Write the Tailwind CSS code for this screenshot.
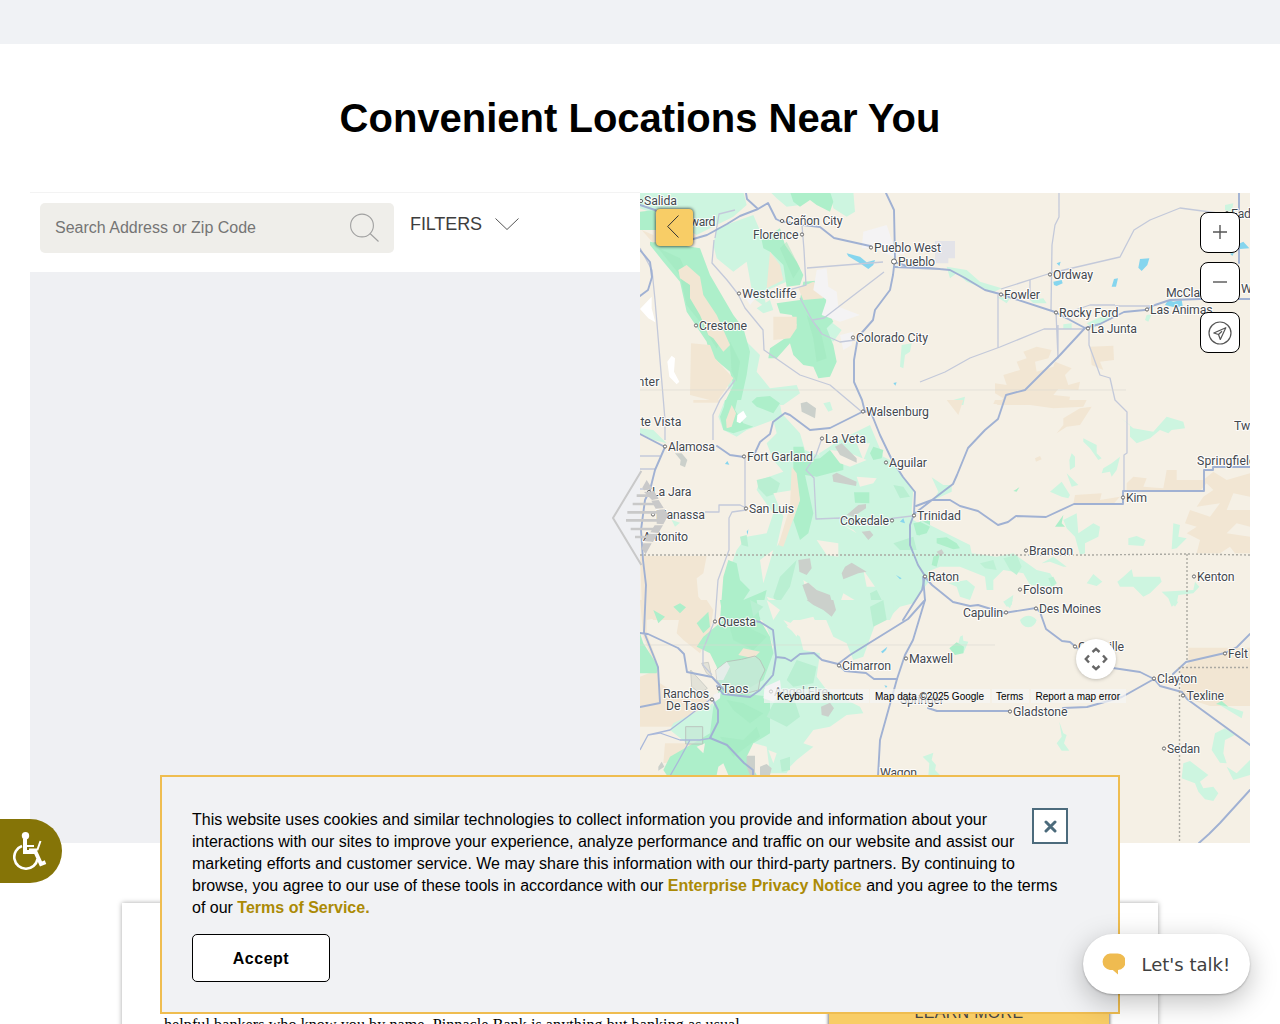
<!DOCTYPE html>
<html lang="en">
<head>
<meta charset="utf-8">
<title>Convenient Locations Near You</title>
<script src="https://cdn.jsdelivr.net/npm/@tailwindcss/browser@4"></script>
</head>
<body class="relative h-[1024px] overflow-hidden bg-white font-['Liberation_Sans',Arial,sans-serif] text-black">
<div class="h-11 bg-[#f0f2f5]"></div>
<h1 class="pt-[51px] h-[149px] text-center text-[40px] leading-[46px] font-bold whitespace-nowrap">Convenient Locations Near You</h1>

<main class="mx-[30px] flex h-[650px]">
  <section class="flex w-[610px] flex-col">
    <div class="-mt-px flex h-20 items-start border-t border-[#f3f3f3] pl-2.5 pt-2.5">
      <div class="flex h-[50px] w-[354px] items-center justify-between rounded-[5px] bg-[#efeeea] px-[15px]">
        <span class="text-base text-[#757575]">Search Address or Zip Code</span>
        <svg class="h-[29px] w-[29px] -mt-0.5" viewBox="0 0 29 29" fill="none" stroke="#a0a0a0" stroke-width="1.1"><circle cx="12" cy="12.500" r="11.400"/><path d="M20 20.500l8.500 8"/></svg>
      </div>
      <div class="ml-4 flex items-center gap-3 pt-[7px] text-[18px] leading-7 text-[#3d3d3d]"><span class="w-[73px] tracking-[-0.1px]">FILTERS</span>
        <svg class="h-3 w-6" viewBox="0 0 24 12" fill="none" stroke="#555" stroke-width="1"><path d="M.5.5L12 11.500 23.500.5"/></svg>
      </div>
    </div>
    <div class="flex-1 bg-[#eff0f3]"></div>
  </section>
  <section class="w-[610px]">
    <svg class="block h-[650px] w-[610px] overflow-hidden" viewBox="640 193 610 650">
      <rect x="640" y="193" width="610" height="650" fill="#f5f0e5"/>

      <!-- terrain: north west -->
      <g transform="translate(600 185) scale(.333333)">
        <path fill="#cdf5e0" d="M120 20H430L440 60 400 95 350 120 290 150 200 100 120 70zM510 20L590 25 600 60 560 65 530 40zM690 20H760L765 80 740 95 700 70zM350 130L460 90 490 160 570 210 590 260 560 290 490 320 500 370 460 340 440 230 400 260 350 220 340 180zM470 370L510 345 520 375 490 385zM660 385L725 435 700 470 660 450zM905 480L935 475 930 500 915 510 910 550 900 545zM440 470L480 510 470 560 510 610 590 600 600 625 550 660H430L380 600 400 560 370 520 400 470zM190 20H420V60L380 80 270 60z"/>
        <path fill="#adefca" d="M120 80L165 75 170 135 120 135zM570 20H690L700 50 690 80 650 60 630 45 600 65 580 50zM150 170L240 180 300 190 330 270 400 390 430 430 450 500 440 570 420 660H370L400 600 390 560 330 510 320 470 280 410 260 380 240 290 190 230 150 180zM485 165L540 130 555 180 590 230 610 270 600 300 560 305 550 240 510 200 490 190zM530 355L600 345 610 290 675 285 680 370 700 410 680 430 700 480 710 530 690 575 655 580 640 545 610 540 580 510 570 475 530 520 505 520 510 490 570 450 590 420 575 390 540 385z"/>
        <path fill="#9fe8be" opacity=".5" d="M175 190L240 220 290 330 330 420 360 470 350 490 300 410 260 360 240 270zM390 470L420 530 410 590 395 560zM560 170L600 250 580 280 540 190zM620 390L660 430 680 520 650 530 640 460z"/>
        <path fill="#f2e6d3" d="M235 255L260 240 300 275 310 330 350 390 390 480 370 500 340 460 325 450 300 390 270 340 270 300 240 280zM273 475L330 480 345 520 400 580 350 650 270 630zM510 200L540 240 550 285 500 310zM520 395L590 395 590 430 570 460 520 465zM595 310L640 290 670 310 670 340 610 345zM125 135L160 150 160 175z"/>
        <path fill="#f4f3f4" d="M790 140L860 120 880 180 930 200 880 215 820 190 785 190zM650 255L680 250 685 305 710 320 715 365 780 390 720 410 665 390 680 345 640 315zM720 450L760 440 755 480 730 495zM435 335L470 335 450 360z"/>
        <path fill="#fff" d="M120 372L155 335 155 370 166 412 145 400zM202 530L215 512 225 520 222 560 238 590 230 598 208 575z"/>
        <path fill="#85d5ee" d="M740 205L780 215 800 232 825 225 820 240 805 252 780 235 745 214zM880 594L890 592 886 602z"/>
      </g>
      <!-- terrain: north east -->
      <g transform="translate(920 185) scale(.333333)">
        <path fill="#e3e3e8" d="M45 168H105V220H85V235H45z"/>
        <path fill="#cdf5e0" d="M80 245L140 255 180 290 245 310 220 322 140 290 110 265 90 280zM230 335L270 340 260 355zM330 345L370 340 380 355 340 355zM430 418L455 415 455 432 430 432zM500 415L590 375 570 400 520 430zM915 60L940 55 935 80 915 75zM680 390L695 388 685 410 675 405zM100 645L135 635 130 660H100z"/>
        <path fill="#f2e6d3" d="M310 500L350 485 395 495 385 520 345 530 350 560 400 545 405 530 455 550 435 570 445 600 480 590 475 615 415 612 400 630 450 635 445 660H230L250 640 225 625 225 595 260 600 250 570 300 555 290 530 320 520zM510 485L580 482 582 525 540 530 550 555 515 540z"/>
        <path fill="#85d5ee" d="M660 222L688 220 682 240 665 258 655 248zM575 305L582 282 594 280 588 305zM400 290L425 285 428 295 410 303 402 300zM410 235L422 230 418 243zM960 175L970 170 988 190 960 192zM735 360L745 345 760 350 785 345 788 362 770 368zM930 206L942 203 937 213z"/>
      </g>
      <!-- terrain: centre west -->
      <g transform="translate(600 400) scale(.333333)">
        <path fill="#cdf5e0" d="M375 0H500L540 12 545 40 600 100 615 150 650 165 720 120 810 75 850 170 870 180 940 270 935 330 940 360 990 390V540L960 580 940 610 900 620 880 640 870 660H360L385 520 410 450 440 410 500 400 520 340 470 270 480 240 550 215 520 180 500 130 530 100 520 60 440 90 410 110 370 90 355 50zM120 85L160 90 200 130 160 120 120 100zM215 360L240 368 225 380zM670 10L690 5 698 30 685 35z"/>
        <path fill="#adefca" d="M360 50L372 20 375 0H412L405 30 430 70 460 80 400 100 370 90zM580 140L610 140 620 180 660 175 690 150 730 170 730 210 690 220 650 230 615 225 640 340 625 400 600 420 580 360 600 300 580 210zM360 660L370 530 385 480 410 490 420 540 450 570 430 600 500 570 480 660zM820 140L850 150 845 175 820 180 810 160zM762 277L808 277 808 310 765 308zM455 5L470 -8 510 -12 540 10 520 40 470 20zM285 490L305 488 312 505 298 515zM220 620L240 605 258 622 235 640zM160 620L190 640 190 660H160zM940 370L990 360V410L950 405z"/>
        <path fill="#b9efd2" d="M470 240L510 230 540 250 530 280 500 290 475 265zM540 530L590 480 570 560 530 620 520 590zM810 580L830 570 860 630 820 640zM880 255L910 260 930 290 900 295zM880 430L940 410 950 450 900 450zM420 410L440 405 445 440 425 435z"/>
        <path fill="#f5f0e5" d="M580 70L630 90 660 170 620 120zM770 230L830 235 820 250 780 260zM770 130L810 130 790 180zM690 150L740 155 800 180 750 200 720 190zM520 280L580 270 595 300 560 390 530 440 550 350zM480 480L520 450 490 550zM650 420L715 430 715 470 680 465zM730 580L780 610 780 640 720 610zM790 510L825 560 800 560zM720 370L760 390 750 380 770 400zM610 540L640 560 620 585zM500 590L530 600 540 640 520 625z"/>
        <path fill="#f2e6d3" d="M280 0H360V8H280zM378 60L395 15 408 40 395 80 380 85zM120 468H320L310 520 290 535 295 590 320 620 330 660H160L140 640 125 600zM575 200L590 220 600 300 550 440 535 435 570 320z"/>
        <path fill="#fff" d="M412 45L430 32 440 50 420 70 410 65z"/>
        <path fill="#cbd0cb" d="M602 10L620 5 648 25 645 55 605 35zM705 140L725 130 770 175 770 188 720 165zM697 225L710 218 770 245 768 258 700 245zM775 315L798 312 798 325 760 350 740 345zM785 395L810 392 820 405 805 420zM595 480L630 475 635 505 620 525 598 515zM735 500L755 488 800 515 775 520 730 538 725 520zM607 555L625 548 650 570 690 585 705 640 690 650 670 635 650 615 625 605zM225 160L245 160 262 180 255 202 240 195 242 180z"/>
        <path fill="#85d5ee" d="M375 192L382 183 388 194zM440 395L445 388 443 405zM888 525L905 535 900 538zM900 365L910 355 915 370z"/>
      </g>
      <!-- terrain: centre east -->
      <g transform="translate(920 400) scale(.333333)">
        <path fill="#cdf5e0" d="M35 232L70 255 95 255 95 275 40 300 55 275zM600 52L640 85 700 95 740 50 790 65 795 85 755 90 745 100 720 90 690 115 650 130 630 110 630 75zM490 115L530 135 530 160 545 175 535 180 510 145 490 125zM455 160L465 170 465 200 450 210 448 180zM600 170L590 210 575 230 570 215 545 220 550 205 575 190zM440 220L475 255 455 260zM390 275L425 245 450 285 445 295 425 290zM430 360L470 340 475 400 520 370 540 380 535 410 495 430 495 460 480 465 465 410 440 385zM625 415L650 408 677 420 670 438 625 435zM760 370L780 375 775 410 800 415 770 445 755 448zM0 360L100 410 150 435 155 460 230 470 280 460 350 510 390 520 410 550 400 560 330 555 310 520 250 510 220 540 220 570 200 570 195 530 120 500 60 500 10 520 0 500zM85 550L140 540 165 560 150 600 120 590 110 560zM365 490L400 470 440 500 430 500 390 485zM500 550L520 522 547 545 530 558zM592 545L610 530 635 508 640 530 720 530 725 545 690 580 670 590 640 560 600 560zM725 575L820 570 825 545 838 560 820 580 775 585 770 610 755 620 745 595zM250 605L280 585 275 615 260 620z"/>
        <path fill="#adefca" d="M405 380L430 345 425 370 435 380zM883 290L890 280 897 300 888 310zM0 365L30 380 20 400 0 405zM50 415L80 412 110 430 120 445 100 448 50 430zM40 470L60 460 50 500 35 495zM280 273L298 262 290 275z"/>
        <path fill="#bdf1d5" d="M250 475L290 465 305 500 290 525 270 510zM180 490L220 480 230 510 195 505zM385 535L400 530 410 550 395 560z"/>
        <path fill="#cbd0cb" d="M50 455L65 448 72 460 60 468z"/>
        <path fill="#f2e6d3" d="M80 0H130L115 45zM225 0H500L490 20 400 25 330 15 220 12zM430 55L480 25 515 20 480 75 440 80 410 100 430 75zM345 175L360 168 365 178 348 185zM465 285L545 280 540 300 600 290 580 312H460zM620 250L640 230 680 235 670 260 730 265 740 210 770 210 770 240 850 240 880 215 920 240 990 220V290L940 280 920 330 990 330V380L950 370 920 400 990 410V460H945L930 440 900 460 830 460 840 420 800 400 830 380 795 370 810 330 870 350 900 310 830 320 850 290 880 270 860 250 840 272H620z"/>
      </g>
      <!-- terrain: south west -->
      <g transform="translate(600 600) scale(.333333)">
        <path fill="#f2e6d3" d="M120 0H320L340 30 330 100 300 160 250 120 230 100 240 40 140 60 140 100 170 180 180 250 260 300 320 280 320 340 230 380 120 380V230L170 210 130 110zM195 430H280L250 480 190 490z"/>
        <path fill="#cdf5e0" d="M440 0H880V40L830 60 790 170 760 180 740 130 700 110 670 40 600 40 560 80 600 110 610 150 660 160 650 230 680 270 740 300 780 320 790 340 740 345 690 380 640 390 610 430 640 440 590 480 570 500 560 520 510 520 500 440 430 420 400 260 460 240 500 200 520 140 500 80zM220 370L340 310 350 400 260 430 210 390z"/>
        <path fill="#adefca" d="M360 0H470L480 60 510 110 520 160 490 240 420 280 510 290 510 400 460 430 440 470 470 525H200L190 510 210 470 280 430 330 400 340 320 360 260 350 200 330 160 290 140 310 110 370 60zM120 100L130 130 175 200 170 220 120 220zM220 20L240 10 258 22 240 40zM160 30L195 50 175 70zM290 70L325 35 330 80 310 100z"/>
        <path fill="#b9efd2" d="M590 180L650 200 640 250 580 260 560 240zM520 310L580 290 600 350 560 380 500 350zM810 20L850 0 860 60 820 80zM540 480L570 470 570 510 545 515zM450 0L490 20 460 50z"/>
        <path fill="#9fe8be" opacity=".45" d="M380 50L440 80 500 110 460 150 400 120zM380 300L430 310 490 340 450 370 400 330zM360 410L430 420 470 380 480 410 400 470z"/>
        <path fill="#f5f0e5" d="M290 440L315 430 310 460zM355 500L370 490 385 525H350zM505 450L530 460 520 490zM600 60L640 50 670 120 620 110zM500 0L540 30 520 60zM550 60L600 80 590 110z"/>
        <path fill="#f2e6d3" d="M415 165L430 145 480 155 460 175z"/>
        <path fill="#c8ead8" opacity=".8" stroke="#b8bcb8" stroke-width="3" d="M348 210L380 185 425 178 465 168 480 180 495 210 480 240 475 270 440 280 380 280 350 240zM257 380H308V432H257z"/>
        <path fill="#dfdfd6" opacity=".8" stroke="#c4c6c0" stroke-width="3" d="M272 210L322 265 300 280 275 260zM305 190L325 187 335 230 320 220z"/>
        <path fill="#eeeeee" opacity=".8" d="M348 210L380 185 390 200 370 240 350 240z"/>
        <path fill="#cbd0cb" d="M620 0H700L708 30 695 50 670 30 640 15zM663 320L690 308 702 325 685 350 665 345zM440 467H465V525H450L440 500zM480 500L500 492 515 505 510 525H480zM175 500L185 485 193 500 175 512z"/>
        <path fill="#f4f3f4" d="M495 260L540 240 545 280 520 305 490 295zM340 285L362 275 360 295 345 305z"/>
        <path fill="#85d5ee" d="M843 155L862 140 858 150 848 160zM853 256L862 258 858 264z"/>
      </g>
      <!-- terrain: south east -->
      <g transform="translate(920 600) scale(.333333)">
        <path fill="#f2e6d3" d="M805 143H990V318H870L785 290 780 210 805 190z"/>
        <path fill="#cdf5e0" d="M120 110L128 106 130 122 145 125 130 160 110 150zM300 60Q325 35 350 60Q345 80 325 82Q305 80 300 60zM250 5L278 0 270 25zM750 0L775 5 765 20zM418 365L430 400 440 405 432 430 448 452 425 452 410 430 425 410zM8 470L40 458 35 480 48 495 45 510 65 530 25 528 28 490zM890 310L920 318 970 335 965 355 940 340zM885 400L915 385 945 405 915 420 910 460 920 490 900 488 875 450zM790 490L810 483 865 525 840 545 850 565 880 560 895 580 880 603 855 598 835 575 825 550 785 535zM920 500L950 520 990 480V525L940 540z"/>
        <path fill="#adefca" d="M88 145L110 127 132 140 130 160 105 165zM888 312L905 303 925 320z"/>
      </g>

      <!-- secondary roads -->
      <g fill="none" stroke="#c3c9da" stroke-width="1.3" stroke-linejoin="round">
        <path d="M640 248L652 270 655 300 660 360 665 420M714 240L712 263 727 280 738 294 745 308 763 330 764 350 800 375 830 385 862 412M715 238L719 214 735 210M785 291L806 285 804 250 802 225M807 268L883 262M812 320L824 318 884 272M800 298L812 320 822 334 840 342 855 340"/>
        <path d="M1059 193V217L1055 225 1052 245 1051 310M1051 273L1001 289M1051 273L1120 257 1134 230 1150 220 1180 208 1225 214M998 295V348M1058 325V358L1056 312M920 382L945 372 970 358 1000 347 1044 329H1085M1075 310L1090 305H1115M1115 306H1150M1089 330V345L1100 375 1110 378 1115 400 1127 412 1127 453 1124 455V490M1030 280V300"/>
        <path d="M745 458V508M713 440V415L720 400 735 380M665 440V420M705 512H719V505H740L746 508M746 510L732 512 729 518V550L718 580 715 620M822 438L816 455 806 470 814 478 816 519 840 518 865 524 895 518 912 516M640 456H660M640 469H655M640 489H648M714 622L703 650 703 665 712 675"/>
        <path d="M640 750L648 735 670 730 690 715 712 698M648 735L660 733 680 740 700 740 712 738M690 740L678 762 670 776" stroke="#a9b8da"/>
        <path stroke="#d9d8d2" stroke-width=".6" d="M640 390H1126M640 645H995"/>
      </g>
      <!-- highways -->
      <g fill="none" stroke="#a0b1d3" stroke-width="1.9" stroke-linejoin="round" stroke-linecap="round">
        <path d="M640 205L655 210 690 240 707 235 727 224 740 216 758 209 768 203 776 219 780 221 803 225 820 227 834 238 870 246 M894 262L907 266 950 270 965 278 985 290 1000 294 1055 312 1085 328 1100 324 1124 312 1145 310M895 267L940 269M746 193L747 199 758 209M640 296L648 290 652 277 650 262 640 250"/>
        <path d="M886 193L894 210 895 258 893 275 890 290 875 310 873 320 858 337 854 360V382L862 400 865 412 870 410 880 435 892 460 903 477 915 492 914 514 910 525V545L918 565 925 576 922 590 903 620M925 600L913 640 905 655 897 679 880 740 878 776"/>
        <path d="M862 412L830 428 810 430 790 415 785 413 773 422 770 434 760 442 754 455M744 457L730 455 717 446M665 447L640 434M665 447L655 470 650 490 645 500 641 530 643 560 646 585 644 632 658 667 660 703 640 707M640 633L648 634 678 648 684 654 687 672 712 677 724 690"/>
        <path d="M914 514L932 500 953 484 957 475 968 448 985 430 998 419 1006 395 1025 390 1045 370 1060 355 1085 328M916 506L932 500 950 500 960 506 978 511 998 525 1008 522 1016 516 1046 517 1074 504H1123V491H1204V470H1213V467H1250M1145 310L1155 305 1170 300 1200 299H1250M1239 193V263"/>
        <path d="M925 577L932 585 953 602 970 606 978 605 1004 613 1036 608 1040 612 1046 629 1062 641 1070 642 1077 648 1113 668 1140 672 1154 679 1160 686 1182 692 1187 699 1250 745M1154 679L1122 697 1087 707 1063 708M1010 711H937L928 708M1173 674L1186 662 1225 653 1237 647 1250 634M1250 790L1220 823 1209 834 1199 843M925 600L908 619 850 655 838 664 822 660 814 653 800 654 791 661 785 658 776 657 773 630 760 622 755 621M776 657L773 675 760 690 750 697 723 694 717 686M838 664L845 671 866 673 874 679H897M713 700L718 710V722L710 738 727 745 744 763 753 770V776M923 577L925 600"/>
      </g>
      <g fill="none" stroke="#aaa9a2" stroke-width="1.4" stroke-dasharray="2 2"><path d="M640 555H1087L1186 554 1250 555M1187 554V662M1182 667.500H1250M1179.500 667V843"/></g>

      <!-- place markers -->
      <g fill="#fff" stroke="#666" stroke-width="1">
        <circle cx="641" cy="201" r="1.6"/><circle cx="782" cy="221" r="1.6"/><circle cx="802" cy="234.500" r="1.6"/><circle cx="871" cy="247.500" r="1.6"/><circle cx="894" cy="261.500" r="2.5"/><circle cx="739" cy="293.500" r="1.6"/><circle cx="696" cy="325.500" r="1.6"/><circle cx="853" cy="337.500" r="1.6"/><circle cx="1001" cy="294.500" r="1.6"/><circle cx="1050" cy="274.500" r="1.6"/><circle cx="1056" cy="312.500" r="1.6"/><circle cx="1088" cy="328.500" r="1.6"/><circle cx="1147" cy="309.500" r="1.6"/><circle cx="863" cy="411.500" r="1.6"/><circle cx="822" cy="438.500" r="1.6"/><circle cx="744" cy="456.500" r="1.6"/><circle cx="665" cy="446.500" r="1.6"/><circle cx="886" cy="462.500" r="1.6"/><circle cx="746" cy="508.500" r="1.6"/><circle cx="653" cy="514.500" r="1.6"/><circle cx="649" cy="492" r="1.6"/><circle cx="892" cy="520.500" r="1.6"/><circle cx="914" cy="515.500" r="1.6"/><circle cx="1123" cy="497.500" r="1.6"/><circle cx="1026" cy="550.500" r="1.6"/><circle cx="1194" cy="576.500" r="1.6"/><circle cx="1020" cy="589.500" r="1.6"/><circle cx="1036" cy="608.500" r="1.6"/><circle cx="1006" cy="612.500" r="1.6"/><circle cx="925" cy="576.500" r="1.6"/><circle cx="715" cy="621.500" r="1.6"/><circle cx="719" cy="688.500" r="1.6"/><circle cx="712" cy="699.500" r="1.6"/><circle cx="771" cy="691.500" r="1.6"/><circle cx="839" cy="665.500" r="1.6"/><circle cx="906" cy="658.500" r="1.6"/><circle cx="1010" cy="711.500" r="1.6"/><circle cx="1154" cy="678.500" r="1.6"/><circle cx="1183" cy="695.500" r="1.6"/><circle cx="1225" cy="653.500" r="1.6"/><circle cx="1164" cy="748.500" r="1.6"/><circle cx="1075" cy="646.500" r="1.6"/><circle cx="1227" cy="213" r="1.6"/>
      </g>
      <!-- place names -->
      <g class="font-[Roboto,sans-serif] text-[12.3px]" fill="#44484e" stroke="#fff" stroke-opacity=".85" stroke-width="2.2" stroke-linejoin="round" paint-order="stroke">
        <text x="644" y="205" textLength="33">Salida</text><text x="675" y="226" textLength="40.500">Howard</text><text x="785.500" y="225" textLength="57">Cañon City</text><text x="753" y="239" textLength="45.500">Florence</text><text x="874" y="252" textLength="67">Pueblo West</text><text x="898" y="266" textLength="37">Pueblo</text><text x="742" y="298" textLength="54.500">Westcliffe</text><text x="699" y="330" textLength="48">Crestone</text><text x="856" y="342" textLength="72">Colorado City</text><text x="622.500" y="386" textLength="37">Center</text>
        <text x="1004" y="299" textLength="36">Fowler</text><text x="1053" y="279" textLength="40">Ordway</text><text x="1059" y="317" textLength="59.500">Rocky Ford</text><text x="1091" y="333" textLength="46">La Junta</text><text x="1166" y="297" textLength="46">McClave</text><text x="1150" y="314" textLength="62.500">Las Animas</text><text x="1231" y="218" textLength="26">Eads</text><text x="1241" y="293">Wiley</text><text x="1234" y="430">Two Buttes</text><text x="1197" y="465" textLength="59">Springfield</text>
        <text x="1126" y="502" textLength="21">Kim</text><text x="1029" y="555" textLength="44">Branson</text><text x="1197" y="581" textLength="37.500">Kenton</text><text x="1023" y="594" textLength="40">Folsom</text><text x="1039" y="613" textLength="62">Des Moines</text><text x="963" y="617" textLength="40">Capulin</text><text x="928" y="581" textLength="31">Raton</text><text x="917" y="520" textLength="44">Trinidad</text><text x="889" y="467" textLength="38">Aguilar</text><text x="866" y="416" textLength="63">Walsenburg</text><text x="825" y="443" textLength="41">La Veta</text><text x="747" y="461" textLength="66">Fort Garland</text><text x="668" y="451" textLength="47">Alamosa</text><text x="616" y="426" textLength="65.500">Monte Vista</text>
        <text x="652" y="496" textLength="39.500">La Jara</text><text x="749" y="513" textLength="45">San Luis</text><text x="656" y="519" textLength="49">Manassa</text><text x="643" y="541" textLength="45">Antonito</text><text x="840" y="525" textLength="49">Cokedale</text><text x="718" y="626" textLength="38">Questa</text><text x="663" y="698" textLength="46">Ranchos</text><text x="666" y="710" textLength="43.500">De Taos</text><text x="722" y="693" textLength="26.500">Taos</text><text x="774" y="696" textLength="54" opacity=".6">Angel Fire</text><text x="842" y="670" textLength="49">Cimarron</text><text x="909" y="663" textLength="44">Maxwell</text><text x="900" y="704" textLength="44">Springer</text><text x="1013" y="716" textLength="54.500">Gladstone</text><text x="1157" y="683" textLength="40">Clayton</text><text x="1186.500" y="700" textLength="37.500">Texline</text><text x="1228" y="658" textLength="20">Felt</text><text x="1167" y="753" textLength="33">Sedan</text><text x="1078" y="651" textLength="46">Grenville</text><text x="880" y="777" textLength="37">Wagon</text>
      </g>
    </svg>
  </section>
</main>

<!-- map controls -->
<button class="absolute left-[656px] top-[209px] flex h-[37px] w-[37px] items-center justify-center rounded-[4px] bg-[#f8cd66] pr-[3px] pb-0.5 shadow-[0_0_3px_1px_rgba(0,0,0,.55)]"><svg class="h-[23px] w-3" viewBox="0 0 12 23" fill="none" stroke="#333"><path d="M11.500.5L.7 11.500 11.500 22.500"/></svg></button>
<div class="absolute left-[1200px] top-[212px] flex flex-col gap-2.5">
  <button class="flex h-[41px] w-10 items-center justify-center rounded-[8px] border border-black bg-white pb-px"><svg class="h-[14px] w-[14px]" viewBox="0 0 14 14" stroke="#555" stroke-width="1.4"><path d="M0 7h14M7 0v14"/></svg></button>
  <button class="-mt-px flex h-[41px] w-10 items-center justify-center rounded-[8px] border border-black bg-white pb-px"><svg class="h-[14px] w-[14px]" viewBox="0 0 14 14" stroke="#555" stroke-width="1.4"><path d="M0 7h14"/></svg></button>
  <button class="-mt-px flex h-[41px] w-10 items-center justify-center rounded-[8px] border border-black bg-white"><svg class="mt-px h-6 w-6" viewBox="0 0 24 24" fill="none" stroke="#555" stroke-width="1.2"><circle cx="12" cy="12" r="11"/><path stroke-linejoin="round" d="M17.800 6.700L5.800 12 10.500 13.500 12.300 18.500zM14 10.200L10.500 13.500"/></svg></button>
</div>
<button class="absolute left-[1076px] top-[638.5px] flex h-10 w-10 items-center justify-center rounded-full bg-white shadow-[0_1px_4px_-1px_rgba(0,0,0,.35)]"><svg class="h-6 w-6" viewBox="0 0 24 24" fill="none" stroke="#666" stroke-width="2.4"><path d="M8.500 5L12 1.800 15.500 5M8.500 19L12 22.200 15.500 19M5 8.500L1.800 12 5 15.500M19 8.500L22.200 12 19 15.500"/></svg></button>
<div class="absolute left-[764px] top-[689px] flex h-[14px] text-[10px] leading-[15px] whitespace-nowrap">
  <span class="w-[105px] bg-[#f5f5f5]/70 pl-[13px]">Keyboard shortcuts</span><span class="ml-px w-[120px] bg-[#f5f5f5]/70 pl-[5px]">Map data ©2025 Google</span><span class="ml-0.5 w-[37px] bg-[#f5f5f5]/70 pl-1">Terms</span><span class="ml-0.5 w-[95px] bg-[#f5f5f5]/70 pl-[4.5px]">Report a map error</span>
</div>
<!-- loading emblem -->
<svg class="absolute left-[600px] top-[460px] h-[110px] w-[80px]" viewBox="0 0 240 330" fill="none" stroke="#c9c9c9"><path stroke-width="6" d="M124 33L39 174 124 315"/><path stroke-width="8" d="M110 107h45M98 132h75M82 157h100M78 181h100M92 207h85M105 231h50"/><path fill="#c9c9c9" stroke="none" d="M140 60l17 27-25 4-5-8zM132 96l30-3 14 23-20 4zM154 122l22-2 15 24-24 2zM170 150l24-2 11 17-15 28-20-2zM164 196h25l-14 23-24-2zM147 221h26l-14 25-27-3zM130 250h25l-18 33-12-17z"/></svg>

<!-- promotion card -->
<div class="absolute left-[122px] top-[903px] flex h-[160px] w-[1036px] items-start bg-white pl-[42px] pt-[110px] shadow-[0_0_5px_rgba(0,0,0,.35)]">
  <p class="w-[665px] font-['Liberation_Serif',serif] text-base leading-6 tracking-[0.1px] whitespace-nowrap">helpful bankers who know you by name. Pinnacle Bank is anything but banking as usual.</p>
  <a class="-mt-6 block h-16 w-[280px] bg-[#f8cd66] pt-[14px] text-center text-[16px] leading-5 tracking-[0.3px] text-[#444] shadow-[0_0_3px_1px_rgba(0,0,0,.5)]">LEARN MORE</a>
</div>

<!-- cookie notice -->
<div class="absolute left-40 top-[775px] h-[239px] w-[960px] border-2 border-[#efbd50] bg-[#f1f2f4] px-[30px] pt-8">
  <p class="text-base leading-[22px] whitespace-nowrap">This website uses cookies and similar technologies to collect information you provide and information about your<br>interactions with our sites to improve your experience, analyze performance and traffic on our website and assist our<br>marketing efforts and customer service. We may share this information with our third-party partners. By continuing to<br>browse, you agree to our use of these tools in accordance with our <b class="text-[#ab8a05]">Enterprise Privacy Notice</b> and you agree to the terms<br>of our <b class="text-[#ab8a05]">Terms of Service.</b></p>
  <button class="mt-[15px] h-12 w-[138px] rounded-[5px] border border-black bg-white pt-0.5 text-base font-bold tracking-[0.5px]">Accept</button>
  <button class="absolute left-[870px] top-[31px] flex h-9 w-9 items-center justify-center border-2 border-[#4c6b7c] bg-white"><svg class="h-[13px] w-[13px]" viewBox="0 0 13 13" stroke="#4c6b7c" stroke-width="3" stroke-linecap="round"><path d="M2 2l9 9M11 2l-9 9"/></svg></button>
</div>

<!-- accessibility tab -->
<button class="absolute left-0 top-[819px] h-16 w-[62px] rounded-r-full bg-[#857407]"><svg class="absolute left-[13px] top-[13px] h-[38px] w-[34px]" viewBox="0 0 34 38" fill="none" stroke="#fff"><circle cx="12.500" cy="3.700" r="3.700" fill="#fff" stroke="none"/><path stroke-width="4" d="M12 7v13h10.500l5.500 12 4.500-1.800" stroke-linejoin="miter"/><path stroke-width="2" d="M13 14h8M16 17.500h8.500l3-8.500"/><path stroke-width="2.600" d="M9 14a11.700 11.700 0 1 0 15.500 13"/></svg></button>

<!-- chat launcher -->
<button class="absolute left-[1083px] top-[934px] flex h-[60px] w-[167px] items-center rounded-full bg-white pl-[18px] shadow-[0_1px_2px_rgba(0,0,0,.25),0_8px_28px_rgba(0,0,0,.25)]"><svg class="h-[22px] w-6" viewBox="0 0 24 22" fill="#efbb50"><path d="M9 .5h7a8 8 0 0 1 1 16.400V21.500l-5.200-4.500H9A8.300 8.300 0 0 1 9 .5z"/></svg><span class="ml-[16.500px] font-['DejaVu_Sans',sans-serif] text-[18px] text-[#404040] whitespace-nowrap">Let's talk!</span></button>
</body>
</html>
